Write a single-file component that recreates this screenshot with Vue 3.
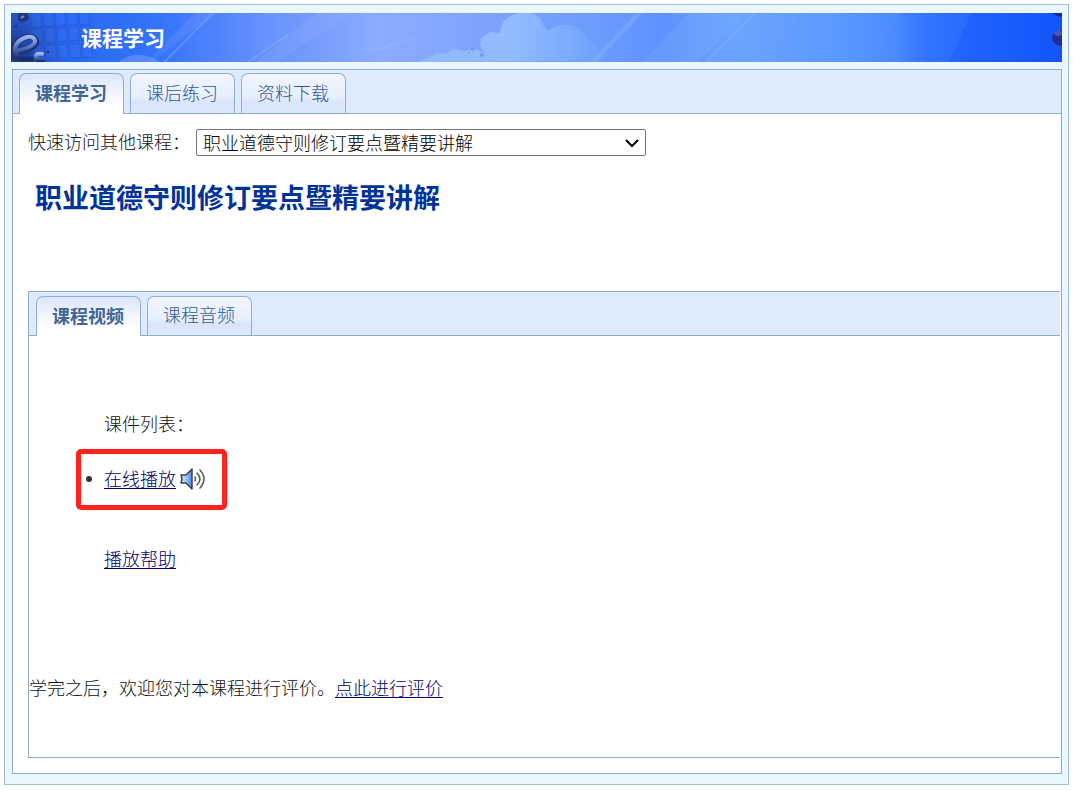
<script setup>
import { ref } from 'vue'

const mainTabs = ['课程学习', '课后练习', '资料下载']
const mediaTabs = ['课程视频', '课程音频']
const activeMain = ref(0)
const activeMedia = ref(0)
const courses = ['职业道德守则修订要点暨精要讲解']
const course = ref(courses[0])
const keyRows = [-2, 14, 31]
const keyCols = [0, 12, 24, 36, 48]
</script>

<template>
  <div class="page">
    <div class="frame">
      <header class="banner">
        <svg class="banner-art" viewBox="0 0 1051 49" preserveAspectRatio="none" aria-hidden="true">
          <defs>
            <linearGradient id="sky" x1="0" x2="1" y1="0" y2="0">
              <stop offset="0" stop-color="#2855c8" />
              <stop offset=".05" stop-color="#2868f0" />
              <stop offset=".14" stop-color="#3473fc" />
              <stop offset=".24" stop-color="#6691fc" />
              <stop offset=".35" stop-color="#8bacff" />
              <stop offset=".45" stop-color="#7fa3fd" />
              <stop offset=".56" stop-color="#6c9cff" />
              <stop offset=".62" stop-color="#5f91ff" />
              <stop offset=".69" stop-color="#6ba4ff" />
              <stop offset=".78" stop-color="#5f9bff" />
              <stop offset=".84" stop-color="#4c8bff" />
              <stop offset=".87" stop-color="#3374ff" />
              <stop offset=".93" stop-color="#2464fe" />
              <stop offset="1" stop-color="#1557fa" />
            </linearGradient>
            <linearGradient id="cloud" x1="0" x2="1" y1="0" y2="0">
              <stop offset="0" stop-color="#8fb9ff" />
              <stop offset=".5" stop-color="#93bcff" />
              <stop offset="1" stop-color="#6c9fff" />
            </linearGradient>
            <linearGradient id="metal" x1="0" x2="0" y1="0" y2="1">
              <stop offset="0" stop-color="#9db5ec" />
              <stop offset=".45" stop-color="#5676bd" />
              <stop offset="1" stop-color="#182d72" />
            </linearGradient>
            <radialGradient id="shade" cx="0" cy=".8" r="1">
              <stop offset="0" stop-color="#10255f" stop-opacity=".8" />
              <stop offset="1" stop-color="#2855c8" stop-opacity="0" />
            </radialGradient>
          </defs>
          <rect width="1051" height="49" fill="url(#sky)" />
          <rect width="60" height="49" fill="url(#shade)" />
          <g fill="#3a78f6" fill-opacity=".25" stroke="#2153c4" stroke-opacity=".45" transform="translate(20 2) skewX(5) skewY(-3)">
            <template v-for="y in keyRows" :key="y">
              <rect v-for="x in keyCols" :key="x" :x="x" :y="y" width="10" height="14" />
            </template>
          </g>
          <g fill="#a9c5ff">
            <path d="M136 49 184 0h22l-66 49z" opacity=".12" />
            <path d="M152 49 201 0h2l-48 49z" opacity=".3" />
            <path d="m236 49 39-27 4-1-41 28z" opacity=".4" />
            <path d="m245 49 60-49h36l-75 49z" opacity=".12" />
            <path d="M108 49q14-12 34-4l7 4z" opacity=".3" />
          </g>
          <path d="m349 37 10-3 11 1 10-5 12-2 7-4 6-1-8 6-13 3-12 5-11 1z" fill="#9abaff" opacity=".35" />
          <path d="m406 49 11-4 8-5 10 1 7-5 11 2 12-2 8 4-4-8 1-7 10-6 8 1 5-12q9-9 23-8 13 0 16 12l5 6q13-9 25-5 8 2 14 12l11 10 8 13z" fill="url(#cloud)" />
          <g fill="#729cfa">
            <circle cx="462" cy="36" r="2" />
            <circle cx="458" cy="40" r="1" />
            <circle cx="471" cy="42" r="2" />
          </g>
          <path d="m580 49 46-49h5l-46 49z" fill="#90b7ff" opacity=".4" />
          <path d="m631 49 47-49h57l-48 49z" fill="#79afff" opacity=".28" />
          <path d="m693 49 49-49h4l-48 49z" fill="#a0c5ff" opacity=".2" />
          <path d="m862 49 26-49H790l-30 49z" fill="#5298ff" opacity=".15" />
          <path d="m938 49 22-49h91v49z" fill="#0d51ff" opacity=".28" />
          <g fill="none" stroke-linecap="round">
            <path d="M4 40Q24 36 25 29q-1-6-9-5Q1 28 3 40q4 9 17 6" stroke="#1c3478" stroke-width="6" />
            <path d="M5 38Q24 34 24 28q-1-5-8-4Q3 28 4 39q4 8 15 6" stroke="url(#metal)" stroke-width="4" />
            <path d="M31 41q-7-1-6 4 2 4 7 3" stroke="url(#metal)" stroke-width="4" />
          </g>
          <path d="M7 0h9q4 5-1 8-6 3-8-2z" fill="#203778" />
          <path d="m10 5 3-2" stroke="#7e94cf" stroke-width="2" />
          <circle cx="5" cy="13" r="1" fill="#12275e" />
          <circle cx="37" cy="39" r="1" fill="#12275e" />
          <ellipse cx="1051" cy="25" rx="10" ry="8" fill="#252b91" />
          <ellipse cx="1047" cy="20" rx="4" ry="3" fill="#4758bd" />
          <path d="M1042 0h9v4q-6-1-9-4z" fill="#16298a" />
        </svg>
        <h1>课程学习</h1>
      </header>

      <main class="panel">
        <div class="tabs" role="tablist" aria-label="课程">
          <button v-for="(t, i) in mainTabs" :key="t" type="button" role="tab" class="tab"
            :class="{ active: activeMain === i }" :aria-selected="activeMain === i" @click="activeMain = i">{{ t }}</button>
        </div>
        <div class="content">
          <div class="quick">
            <label for="course">快速访问其他课程：</label>
            <div class="picker">
              <select id="course" v-model="course">
                <option v-for="c in courses" :key="c">{{ c }}</option>
              </select>
              <svg class="chevron" width="14" height="9" viewBox="0 0 14 9" aria-hidden="true">
                <path d="m1 1 6 6 6-6" fill="none" stroke="#000" stroke-width="2" />
              </svg>
            </div>
          </div>
          <h2>{{ course }}</h2>

          <section class="media">
            <div class="tabs" role="tablist" aria-label="课件">
              <button v-for="(t, i) in mediaTabs" :key="t" type="button" role="tab" class="tab"
                :class="{ active: activeMedia === i }" :aria-selected="activeMedia === i" @click="activeMedia = i">{{ t }}</button>
            </div>
            <div class="lessons">
              <p>课件列表：</p>
              <ul>
                <li>
                  <a href="#play">在线播放</a>
                  <svg class="speaker" width="26" height="24" viewBox="0 0 26 24" aria-hidden="true">
                    <defs>
                      <linearGradient id="cone" x1="0" x2="1" y1="0" y2="0">
                        <stop offset="0" stop-color="#dceafc" />
                        <stop offset=".4" stop-color="#a9c9f5" />
                        <stop offset="1" stop-color="#4f86dd" />
                      </linearGradient>
                    </defs>
                    <path d="M1 8h5l6-6v20l-6-6H1l1-4z" fill="url(#cone)" stroke="#38414f" stroke-width="1.5" stroke-linejoin="round" />
                    <g fill="none" stroke="#555" stroke-width="1.5" stroke-linecap="round">
                      <path d="M15 10q1 2 0 4" />
                      <path d="M17 6q6 6 0 12" />
                      <path d="M20 3q8 9 0 18" />
                    </g>
                  </svg>
                </li>
              </ul>
              <a class="help" href="#help">播放帮助</a>
            </div>
            <p class="review">学完之后，欢迎您对本课程进行评价。<a href="#review">点此进行评价</a></p>
          </section>
        </div>
      </main>
    </div>
  </div>
</template>

<style>
body {
  margin: 0;
  background: #fff;
}
</style>

<style scoped>
.page {
  padding: 4px 9px 6px 4px;
  font: 300 18px/24px "Noto Sans CJK SC", sans-serif;
  color: #111;
}
.page * {
  box-sizing: border-box;
}
.frame {
  padding: 8px 6px 10px;
  border: 1px solid #9dbdd8;
  background: #eaf7ff;
}
.banner {
  position: relative;
  display: flex;
  align-items: center;
  height: 49px;
  padding: 0 0 2px 70px;
  overflow: hidden;
}
.banner-art {
  position: absolute;
  inset: 0;
  width: 100%;
  height: 100%;
}
h1 {
  position: relative;
  margin: 0;
  color: #fff;
  font-size: 21px;
  line-height: 28px;
  font-weight: 700;
}
.panel {
  margin: 7px 0 0 1px;
  border: 1px solid #8eacca;
  background: #fff;
}
.tabs {
  display: flex;
  gap: 6px;
  padding: 3px 6px 0;
  background: #deebfd;
  border-bottom: 1px solid #8eacca;
}
.tab {
  width: 105px;
  height: 40px;
  padding: 0 1px 4px 0;
  border: 1px solid #8fadd6;
  border-bottom: 0;
  border-radius: 7px 7px 0 0;
  background: linear-gradient(#f0f5ff, #e7effe 60%, #d9e6fc 70%, #dce8fc);
  color: #35598c;
  font: inherit;
  cursor: pointer;
}
.tab.active {
  height: 41px;
  margin-bottom: -1px;
  background: linear-gradient(#dce6fc, #fff 80%);
  color: #416595;
  font-weight: 700;
}
.content {
  padding: 15px 0 15px 15px;
}
.quick {
  display: flex;
  align-items: flex-start;
  gap: 6px;
}
.picker {
  position: relative;
  width: 450px;
}
.quick select {
  display: block;
  width: 100%;
  height: 27px;
  padding: 0 24px 3px 6px;
  border: 1px solid #767676;
  border-radius: 2px;
  background: #fff;
  color: #000;
  font: inherit;
  appearance: none;
}
.chevron {
  position: absolute;
  top: 10px;
  right: 7px;
  pointer-events: none;
}
h2 {
  margin: 23px 8px 76px 7px;
  color: #039;
  font-size: 27px;
  line-height: 36px;
  font-weight: 700;
}
.media {
  margin-right: 1px;
  border: 1px solid #8eacca;
  border-right: 0;
}
.media .tabs {
  padding-top: 4px;
  padding-left: 7px;
}
.media .tab {
  height: 39px;
}
.media .tab.active {
  height: 40px;
}
.lessons {
  padding: 75px 0 0 47px;
}
.lessons p,
.review {
  margin: 0;
}
.lessons p,
.help {
  margin-left: 28px;
}
ul {
  width: 151px;
  margin: 14px 0 36px;
  padding: 11px 0 14px 5px;
  border: 5px solid #fb231b;
  border-radius: 5px;
  list-style: none;
}
li {
  display: flex;
  align-items: center;
  gap: 4px;
}
li::before {
  content: "";
  width: 6px;
  height: 6px;
  margin: 2px 8px 0 0;
  border-radius: 50%;
  background: #333;
}
.speaker {
  margin-top: 2px;
}
a {
  color: #006;
  text-decoration: underline;
  text-underline-offset: 2px;
}
.review {
  padding: 105px 0 58px;
}
</style>
